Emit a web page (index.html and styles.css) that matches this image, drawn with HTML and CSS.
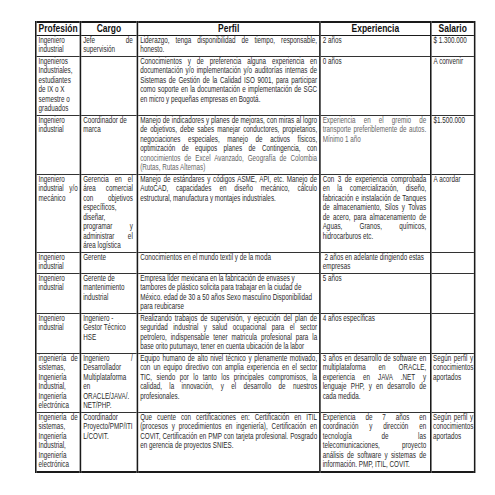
FILE: index.html
```html
<!DOCTYPE html>
<html lang="es">
<head>
<meta charset="utf-8">
<title>Ofertas</title>
<link rel="stylesheet" href="styles.css">
</head>
<body>
<div class="frame">
<table class="grid">
  <colgroup>
    <col class="c-prof"><col class="c-cargo"><col class="c-perfil"><col class="c-exp"><col class="c-sal">
  </colgroup>
  <thead>
    <tr><th>Profesión</th><th>Cargo</th><th>Perfil</th><th>Experiencia</th><th>Salario</th></tr>
  </thead>
  <tbody>
    <tr>
      <td>Ingeniero industrial</td>
      <td>Jefe de supervisión</td>
      <td>Liderazgo, tenga disponibilidad de tiempo, responsable, honesto.</td>
      <td>2 años</td>
      <td>$ 1.300.000</td>
    </tr>
    <tr>
      <td class="left">Ingenieros Industriales, estudiantes de IX o X semestre o graduados</td>
      <td></td>
      <td>Conocimientos y de preferencia alguna experiencia en documentación y/o implementación y/o auditorías internas de Sistemas de Gestión de la Calidad ISO 9001, para participar como soporte en la documentación e implementación de SGC en micro y pequeñas empresas en Bogotá.</td>
      <td>0 años</td>
      <td>A convenir</td>
    </tr>
    <tr>
      <td>Ingeniero industrial</td>
      <td class="left">Coordinador de marca</td>
      <td>Manejo de indicadores y planes de mejoras, con miras al logro de objetivos, debe sabes manejar conductores, propietarios, negociaciones especiales, manejo de activos físicos, optimización de equipos planes de Contingencia, con <span class="soft">conocimientos de Excel Avanzado, Geografía de Colombia (Rutas, Rutas Alternas)</span></td>
      <td class="soft">Experiencia en el gremio de transporte preferiblemente de autos. Mínimo 1 año</td>
      <td>$1.500.000</td>
    </tr>
    <tr>
      <td>Ingeniero industrial y/o mecánico</td>
      <td>Gerencia en el área comercial con objetivos específicos, diseñar, programar y administrar el área logística</td>
      <td>Manejo de estándares y códigos ASME, API, etc. Manejo de AutoCAD, capacidades en diseño mecánico, cálculo estructural, manufactura y montajes industriales.</td>
      <td>Con 3 de experiencia comprobada en la comercialización, diseño, fabricación e instalación de Tanques de almacenamiento, Silos y Tolvas de acero, para almacenamiento de Aguas, Granos, químicos, hidrocarburos etc.</td>
      <td>A acordar</td>
    </tr>
    <tr>
      <td>Ingeniero industrial</td>
      <td>Gerente</td>
      <td>Conocimientos en el mundo textil y de la moda</td>
      <td class="left">&nbsp;2 años en adelante dirigiendo estas empresas</td>
      <td></td>
    </tr>
    <tr>
      <td>Ingeniero industrial</td>
      <td class="left">Gerente de mantenimiento industrial</td>
      <td class="left">Empresa líder mexicana en la fabricación de envases y tambores de plástico solicita para trabajar en la ciudad de México. edad de 30 a 50 años Sexo masculino Disponibilidad para reubicarse</td>
      <td>5 años</td>
      <td></td>
    </tr>
    <tr>
      <td>Ingeniero industrial</td>
      <td class="left">Ingeniero - Gestor Técnico HSE</td>
      <td>Realizando trabajos de supervisión, y ejecución del plan de seguridad industrial y salud ocupacional para el sector petrolero, indispensable tener matricula profesional para la base orito putumayo, tener en cuenta ubicación de la labor</td>
      <td>4 años específicas</td>
      <td></td>
    </tr>
    <tr>
      <td>ingeniería de sistemas, Ingeniería Industrial, Ingeniería electrónica</td>
      <td>Ingeniero / Desarrollador Multiplataforma en ORACLE/JAVA/. NET/PHP.</td>
      <td>Equipo humano de alto nivel técnico y plenamente motivado, con un equipo directivo con amplia experiencia en el sector TIC, siendo por lo tanto los principales compromisos, la calidad, la innovación, y el desarrollo de nuestros profesionales.</td>
      <td>3 años en desarrollo de software en multiplataforma en ORACLE, experiencia en JAVA .NET y lenguaje PHP, y en desarrollo de cada medida.</td>
      <td class="sal">Según perfil y conocimientos aportados</td>
    </tr>
    <tr>
      <td>Ingeniería de sistemas, Ingeniería Industrial, Ingeniería electrónica</td>
      <td class="left">Coordinador Proyecto/PMP/ITI<br>L/COVIT.</td>
      <td>Que cuente con certificaciones en: Certificación en ITIL (procesos y procedimientos en ingeniería), Certificación en COVIT, Certificación en PMP con tarjeta profesional. Posgrado en gerencia de proyectos SNIES.</td>
      <td>Experiencia de 7 años en coordinación y dirección en tecnología de las telecomunicaciones, proyecto análisis de software y sistemas de información. PMP, ITIL, COVIT.</td>
      <td class="sal">Según perfil y conocimientos aportados</td>
    </tr>
  </tbody>
</table>
</div>
</body>
</html>
```

FILE: styles.css
```css
html, body {
  margin: 0;
  padding: 0;
  background: #ffffff;
  overflow: hidden;
}

body {
  font-family: "Liberation Sans", Arial, sans-serif;
  color: #2a2a2a;
}

.frame {
  padding: 21px 0 0 35px;
  width: 460px;
  overflow: hidden;
}

/* Arial Narrow look: Arial compressed horizontally */
.grid {
  border-collapse: collapse;
  table-layout: fixed;
  width: 570px;
  transform: scaleX(0.77);
  transform-origin: 0 0;
  border: 2px solid #1a1a1a;
}

.c-prof { width: 58px; }
.c-cargo { width: 74px; }
.c-perfil { width: 237px; }
.c-exp { width: 144px; }
.c-sal { width: 57px; }

.grid th {
  font-size: 11px;
  line-height: 11.5px;
  font-weight: bold;
  text-align: center;
  color: #111;
  padding: 0 2px;
  border-left: 2px solid #1a1a1a;
  border-right: 2px solid #1a1a1a;
  border-bottom: 1px solid #1a1a1a;
}

.grid td {
  font-size: 8.2px;
  line-height: 9.5px;
  vertical-align: top;
  text-align: justify;
  padding: 0 2.6px 1px 2.6px;
  border-left: 2px solid #1a1a1a;
  border-right: 2px solid #1a1a1a;
  border-bottom: 1px solid #333;
}

.grid td:nth-child(2),
.grid td:nth-child(4) {
  padding-right: 5px;
}

.grid td.left {
  text-align: left;
}

.grid td.sal {
  padding-left: 2px;
  padding-right: 1px;
}

.soft {
  color: #666;
}
```
